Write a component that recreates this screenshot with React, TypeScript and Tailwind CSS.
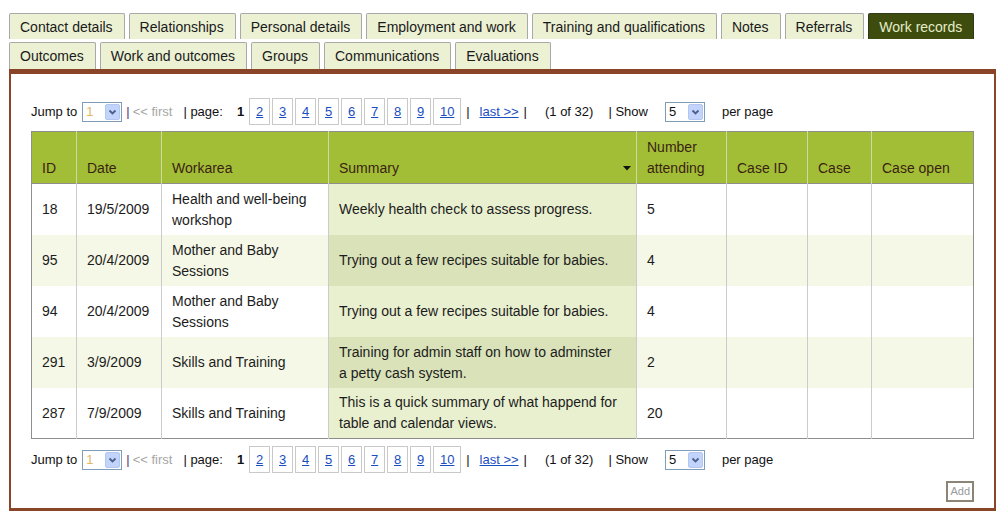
import React from 'react';

const TABS_TOP = ['Contact details', 'Relationships', 'Personal details', 'Employment and work', 'Training and qualifications', 'Notes', 'Referrals', 'Work records'];
const TABS_BOTTOM = ['Outcomes', 'Work and outcomes', 'Groups', 'Communications', 'Evaluations'];

const ROWS = [
  { id: '18', date: '19/5/2009', area: 'Health and well-being workshop', summary: 'Weekly health check to assess progress.', num: '5' },
  { id: '95', date: '20/4/2009', area: 'Mother and Baby Sessions', summary: 'Trying out a few recipes suitable for babies.', num: '4' },
  { id: '94', date: '20/4/2009', area: 'Mother and Baby Sessions', summary: 'Trying out a few recipes suitable for babies.', num: '4' },
  { id: '291', date: '3/9/2009', area: 'Skills and Training', summary: 'Training for admin staff on how to adminster a petty cash system.', num: '2' },
  { id: '287', date: '7/9/2009', area: 'Skills and Training', summary: 'This is a quick summary of what happend for table and calendar views.', num: '20' },
];

function Tab({ label, active }: { label: string; active?: boolean }) {
  return (
    <div
      className={`flex h-full items-center rounded-t-[2px] border border-b-0 pl-[10px] pr-[11px] pt-[1px] text-[14px] ${
        active ? 'border-[#2f3a1a] bg-[#3e4c0d] text-[#e4ecca]' : 'border-[#a9a9a9] bg-[#ecf1d4] text-[#1a1a1a]'
      }`}
    >
      {label}
    </div>
  );
}

function FakeSelect({ value, faded }: { value: string; faded?: boolean }) {
  return (
    <div className="flex h-[20px] w-[40px] items-stretch border border-[#7f9db9] bg-white">
      <span className={`flex-1 pl-[3px] text-[13px] leading-[18px] ${faded ? 'text-[#e2b860]' : 'text-[#111]'}`}>{value}</span>
      <span className="m-[1px] flex w-[15px] items-center justify-center rounded-[2px] border border-[#b3c6f2] bg-[#c3d4fc]">
        <svg width="9" height="6" viewBox="0 0 9 6">
          <path d="M1.5 1.5l3 3 3-3" stroke="#4a5f8a" strokeWidth="1.8" fill="none" />
        </svg>
      </span>
    </div>
  );
}

function Pager() {
  const pages = ['2', '3', '4', '5', '6', '7', '8', '9', '10'];
  return (
    <div className="flex h-[27px] items-center text-[13px] text-[#111]">
      <span>Jump to</span>
      <span className="ml-[5px]">
        <FakeSelect value="1" faded />
      </span>
      <span className="ml-[4px] text-[#5b2c6f]">|</span>
      <span className="ml-[3px] text-[#a6a6a6]">&lt;&lt; first</span>
      <span className="ml-[11px]">| page:</span>
      <span className="ml-[14px] font-bold">1</span>
      <div className="ml-[5px] flex gap-[2px]">
        {pages.map((p) => (
          <span
            key={p}
            className={`flex h-[27px] items-center justify-center border border-[#c9c9c9] text-[#1a4dbf] underline ${
              p === '10' ? 'w-[28px]' : 'w-[21px]'
            }`}
          >
            {p}
          </span>
        ))}
      </div>
      <span className="ml-[5px]">|</span>
      <span className="ml-[10px] text-[#1a4dbf] underline">last &gt;&gt;</span>
      <span className="ml-[5px]">|</span>
      <span className="ml-[18px]">(1 of 32)</span>
      <span className="ml-[15px]">| Show</span>
      <span className="ml-[17px]">
        <FakeSelect value="5" />
      </span>
      <span className="ml-[17px]">per page</span>
    </div>
  );
}

export default function App() {
  return (
    <div className="h-[520px] w-[1006px] bg-white pl-[9px] pr-[10px] pt-[13px] font-['Liberation_Sans',Arial,sans-serif]">
      {/* tabs */}
      <div className="flex h-[26px] gap-[4px]">
        {TABS_TOP.map((t) => (
          <Tab key={t} label={t} active={t === 'Work records'} />
        ))}
      </div>
      <div className="mt-[3px] flex h-[27px] gap-[4px]">
        {TABS_BOTTOM.map((t) => (
          <Tab key={t} label={t} />
        ))}
      </div>

      {/* panel */}
      <div className="border-x-2 border-b-[3px] border-t-[5px] border-[#8a4528] px-[20px] pb-[6px] pt-[24px]">
        <Pager />

        <table className="mt-[6px] w-[942px] table-fixed border-collapse border border-[#8e8e8e] text-[14px] leading-[21px] text-[#1c1c1c]">
          <colgroup>
            <col className="w-[45px]" />
            <col className="w-[85px]" />
            <col className="w-[167px]" />
            <col className="w-[308px]" />
            <col className="w-[90px]" />
            <col className="w-[81px]" />
            <col className="w-[64px]" />
            <col className="w-[102px]" />
          </colgroup>
          <thead>
            <tr className="h-[52px] border-b border-[#8e8e8e] bg-[#a2be36] text-left text-[#3a1f14]">
              <th className="px-[10px] pb-[4px] align-bottom font-normal">ID</th>
              <th className="border-l border-[#cfd9a6] px-[10px] pb-[4px] align-bottom font-normal">Date</th>
              <th className="border-l border-[#cfd9a6] px-[10px] pb-[4px] align-bottom font-normal">Workarea</th>
              <th className="border-l border-[#cfd9a6] pb-[4px] pl-[10px] pr-[5px] align-bottom font-normal">
                <div className="flex items-center justify-between">
                  <span>Summary</span>
                  <svg width="8" height="5" viewBox="0 0 8 5">
                    <path d="M0 0h8L4 4.5z" fill="#111" />
                  </svg>
                </div>
              </th>
              <th className="border-l border-[#cfd9a6] px-[10px] pb-[4px] align-bottom font-normal">
                Number attending
              </th>
              <th className="border-l border-[#cfd9a6] px-[10px] pb-[4px] align-bottom font-normal">Case ID</th>
              <th className="border-l border-[#cfd9a6] px-[10px] pb-[4px] align-bottom font-normal">Case</th>
              <th className="border-l border-[#cfd9a6] px-[10px] pb-[4px] align-bottom font-normal">Case open</th>
            </tr>
          </thead>
          <tbody>
            {ROWS.map((r, i) => {
              const alt = i % 2 === 1;
              return (
                <tr key={r.id} className={`h-[51px] ${alt ? 'bg-[#f5f8e7]' : 'bg-white'}`}>
                  <td className="px-[10px] pt-[1px] align-middle">{r.id}</td>
                  <td className="border-l border-[#cbcbcb] px-[10px] pt-[1px] align-middle">{r.date}</td>
                  <td className="border-l border-[#cbcbcb] px-[10px] pt-[1px] align-middle">{r.area}</td>
                  <td
                    className={`border-l border-[#cbcbcb] pl-[10px] pr-[15px] pt-[1px] align-middle ${
                      alt ? 'bg-[#d9e2b8]' : 'bg-[#e9f0d0]'
                    }`}
                  >
                    {r.summary}
                  </td>
                  <td className="border-l border-[#cbcbcb] px-[10px] pt-[1px] align-middle">{r.num}</td>
                  <td className="border-l border-[#cbcbcb]" />
                  <td className="border-l border-[#cbcbcb]" />
                  <td className="border-l border-[#cbcbcb]" />
                </tr>
              );
            })}
          </tbody>
        </table>

        <div className="mt-[7px]">
          <Pager />
        </div>

        <div className="mt-[8px] flex justify-end">
          <button type="button" className="h-[21px] border-2 border-[#8c8474] bg-white px-[2px] text-[11px] leading-[15px] text-[#9a9a9a]">
            Add
          </button>
        </div>
      </div>
    </div>
  );
}
